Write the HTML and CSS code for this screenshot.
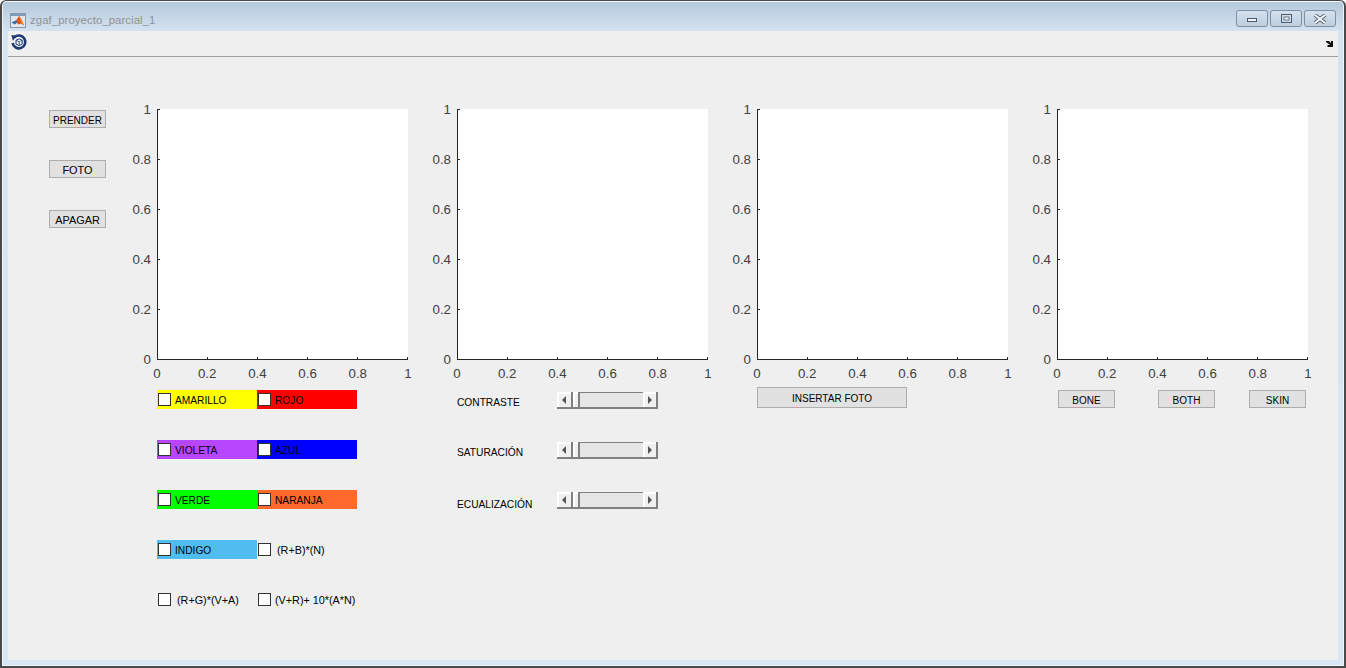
FILE: index.html
```html
<!DOCTYPE html>
<html lang="es">
<head>
    <meta charset="UTF-8">
    <title>zgaf_proyecto_parcial_1</title>
    <link rel="stylesheet" href="styles.css">
</head>
<body>
<div class="window">
    <div class="titlebar">
        <div class="title">
            <svg class="app-icon" width="16" height="15" viewBox="0 0 16 15">
                <rect x="0.5" y="0.5" width="15" height="14" fill="#dfe6ee" stroke="#8a97a6"/>
                <rect x="1" y="1" width="14" height="2" fill="#7d9dc4"/>
                <path d="M1.5 9.5 L6 7.5 L9 3 L11 5.5 L14 12.5 L11 10.5 L9 11.5 L6 9.5 Z" fill="#d9541e"/>
                <path d="M1.5 9.5 L6 7.5 L7 9.5 L5 11.5 Z" fill="#2f6fb3"/>
                <path d="M9 3 L11 5.5 L14 12.5 L11 9.5 Z" fill="#f08a24"/>
            </svg>
            <span>zgaf_proyecto_parcial_1</span>
        </div>
        <div class="win-buttons">
            <div class="win-btn btn-min"><svg width="10" height="4" viewBox="0 0 10 4"><rect x="0.5" y="0.5" width="9" height="3" fill="#f2f4f7" stroke="#4d5a6b"/></svg></div>
            <div class="win-btn btn-max"><svg width="11" height="9" viewBox="0 0 11 9"><rect x="0.5" y="0.5" width="10" height="8" fill="#cfdceb" stroke="#4d5a6b"/><rect x="3" y="3" width="5" height="3" fill="#f2f4f7" stroke="#4d5a6b" stroke-width="0.8"/></svg></div>
            <div class="win-btn btn-close"><svg width="14" height="10" viewBox="0 0 14 10"><path d="M2 1 L12 9 M12 1 L2 9" stroke="#4d5a6b" stroke-width="3.8"/><path d="M2 1 L12 9 M12 1 L2 9" stroke="#f4f6f8" stroke-width="2.2"/></svg></div>
        </div>
    </div>

    <div class="client">
        <div class="toolbar">
            <svg width="18" height="18" viewBox="0 0 18 18">
                <path d="M4.4 4.4 A6.4 6.4 0 1 1 2.6 10" fill="none" stroke="#1f3a72" stroke-width="2.6"/>
                <path d="M1.4 2 L7 2.8 L2.8 7.8 Z" fill="#1f3a72"/>
                <path d="M6 7.2 L9.2 5.8 L12.2 7.2 L12.2 11 L9.2 12.6 L6 11 Z" fill="#eef2f8" stroke="#1f3a72"/>
                <path d="M6.2 7.4 L9.2 8.8 L12 7.4 M9.2 8.8 L9.2 12.4" fill="none" stroke="#1f3a72" stroke-width="0.8"/>
            </svg>
            <svg class="dock" width="7" height="6" viewBox="0 0 7 6"><path d="M0 0 L3 0 L5 2 L5 0 L7 0 L7 6 L1.5 6 L1.5 4 L4 4 L0 1 Z" fill="#111"/></svg>
        </div>

        <div class="stage">
            <div class="side-buttons">
                <div class="push">PRENDER</div>
                <div class="push big">FOTO</div>
                <div class="push big">APAGAR</div>
            </div>

            <div class="panel">
                <div class="axes">
                    <div class="yticks"><span>1</span><span>0.8</span><span>0.6</span><span>0.4</span><span>0.2</span><span>0</span></div>
                    <div class="plot"></div>
                </div>
                <div class="xticks"><span>0</span><span>0.2</span><span>0.4</span><span>0.6</span><span>0.8</span><span>1</span></div>
                <div class="checks">
                    <label class="check amarillo"><i></i>AMARILLO</label>
                    <label class="check rojo"><i></i>ROJO</label>
                    <label class="check violeta"><i></i>VIOLETA</label>
                    <label class="check azul"><i></i>AZUL</label>
                    <label class="check verde"><i></i>VERDE</label>
                    <label class="check naranja"><i></i>NARANJA</label>
                    <label class="check indigo"><i></i>INDIGO</label>
                    <label class="check formula wide"><i></i>(R+B)*(N)</label>
                    <label class="check formula wide"><i></i>(R+G)*(V+A)</label>
                    <label class="check formula"><i></i>(V+R)+ 10*(A*N)</label>
                </div>
            </div>

            <div class="panel">
                <div class="axes">
                    <div class="yticks"><span>1</span><span>0.8</span><span>0.6</span><span>0.4</span><span>0.2</span><span>0</span></div>
                    <div class="plot"></div>
                </div>
                <div class="xticks"><span>0</span><span>0.2</span><span>0.4</span><span>0.6</span><span>0.8</span><span>1</span></div>
                <div class="sliders">
                    <div class="slider-row">
                        <span class="slider-label">CONTRASTE</span>
                        <div class="slider"><b class="arrow left"></b><b class="thumb"></b><b class="track"></b><b class="arrow right"></b></div>
                    </div>
                    <div class="slider-row">
                        <span class="slider-label">SATURACIÓN</span>
                        <div class="slider"><b class="arrow left"></b><b class="thumb"></b><b class="track"></b><b class="arrow right"></b></div>
                    </div>
                    <div class="slider-row low">
                        <span class="slider-label">ECUALIZACIÓN</span>
                        <div class="slider"><b class="arrow left"></b><b class="thumb"></b><b class="track"></b><b class="arrow right"></b></div>
                    </div>
                </div>
            </div>

            <div class="panel">
                <div class="axes">
                    <div class="yticks"><span>1</span><span>0.8</span><span>0.6</span><span>0.4</span><span>0.2</span><span>0</span></div>
                    <div class="plot"></div>
                </div>
                <div class="xticks"><span>0</span><span>0.2</span><span>0.4</span><span>0.6</span><span>0.8</span><span>1</span></div>
                <div class="push insert">INSERTAR FOTO</div>
            </div>

            <div class="panel last">
                <div class="axes">
                    <div class="yticks"><span>1</span><span>0.8</span><span>0.6</span><span>0.4</span><span>0.2</span><span>0</span></div>
                    <div class="plot"></div>
                </div>
                <div class="xticks"><span>0</span><span>0.2</span><span>0.4</span><span>0.6</span><span>0.8</span><span>1</span></div>
                <div class="map-buttons">
                    <div class="push">BONE</div>
                    <div class="push">BOTH</div>
                    <div class="push">SKIN</div>
                </div>
            </div>
        </div>
    </div>
</div>
</body>
</html>
```

FILE: styles.css
```css
/* ventana */
html, body {
    margin: 0;
    height: 100%;
    overflow: hidden;
}

body {
    font-family: "Liberation Sans", Arial, sans-serif;
    background: #ffffff;
}

.window {
    width: 1346px;
    height: 668px;
    box-sizing: border-box;
    padding: 0 6px 6px 6px;
    border: 1px solid #4a4a4a;
    border-width: 1px 2px 2px 2px;
    border-radius: 6px 6px 0 0;
    background: linear-gradient(to bottom, #b4c8db 0, #d6e4f2 32px, #d9e6f3 100%);
    box-shadow: inset 0 0 0 1px #f1f5f9;
    display: flex;
    flex-direction: column;
}

.titlebar {
    height: 30px;
    flex: none;
    display: flex;
    justify-content: space-between;
}

.title {
    display: flex;
    align-items: center;
    gap: 4px;
    font-size: 11.3px;
    color: #8e9298;
    margin-left: 2px;
    letter-spacing: 0.1px;
    padding-top: 9px;
    height: 20px;
}

.win-buttons {
    display: flex;
    gap: 2px;
    margin-top: 9px;
    margin-right: 2px;
    height: 17px;
}

.win-btn {
    box-sizing: border-box;
    width: 32px;
    height: 17px;
    border: 1px solid #7f8fa3;
    border-radius: 3px;
    background: linear-gradient(to bottom, #d5e1ee, #bccede);
    display: flex;
    align-items: center;
    justify-content: center;
}

.btn-min svg {
    margin-top: 3px;
}

.client {
    flex: 1;
    background: #efefef;
    display: flex;
    flex-direction: column;
    min-height: 0;
}

.toolbar {
    height: 26px;
    flex: none;
    box-sizing: border-box;
    border-bottom: 1px solid #a0a0a0;
    padding: 2px 5px 0 2px;
    display: flex;
    justify-content: space-between;
    align-items: flex-start;
}

.dock {
    margin-top: 8px;
}

/* zona de controles */
.stage {
    display: flex;
    padding: 52px 0 0 41px;
}

.side-buttons {
    display: flex;
    flex-direction: column;
    gap: 32px;
    flex: none;
    width: 57px;
    margin: 1px 51px 0 0;
}

.push {
    box-sizing: border-box;
    height: 18px;
    padding-top: 2px;
    border: 1px solid #adadad;
    background: #e1e1e1;
    color: #000;
    font-size: 10px;
    display: flex;
    align-items: center;
    justify-content: center;
}

.push.big {
    font-size: 10.9px;
}

.panel {
    flex: none;
    width: 251px;
    margin-right: 49px;
}

.panel.last {
    margin-right: 0;
}

/* ejes */
.axes {
    display: flex;
    height: 251px;
}

.yticks {
    width: 0;
    margin-left: -6px;
    margin-right: 6px;
    display: flex;
    flex-direction: column;
    justify-content: space-between;
}

.yticks span {
    height: 0;
    display: flex;
    align-items: center;
    justify-content: flex-end;
    font-size: 13.3px;
    color: #404040;
}

.plot {
    flex: 1;
    box-sizing: border-box;
    border-left: 1px solid #262626;
    border-bottom: 1px solid #262626;
    background-color: #ffffff;
    background-image:
        repeating-linear-gradient(to right, #262626 0 1px, transparent 1px 50px),
        repeating-linear-gradient(to bottom, #262626 0 1px, transparent 1px 50px);
    background-origin: border-box;
    background-clip: border-box;
    background-size: 100% 3px, 3px 100%;
    background-position: left bottom, left top;
    background-repeat: no-repeat;
}

.xticks {
    display: flex;
    justify-content: space-between;
    height: 15px;
    margin-top: 6px;
}

.xticks span {
    width: 0;
    display: flex;
    justify-content: center;
    font-size: 13.3px;
    line-height: 15px;
    color: #404040;
}

/* casillas de color */
.checks {
    display: grid;
    grid-template-columns: 100px 100px;
    grid-auto-rows: 19px;
    row-gap: 31px;
    margin-top: 9px;
}

.check {
    display: flex;
    align-items: center;
    box-sizing: border-box;
    font-size: 10.2px;
    color: #000;
    padding: 2px 0 0 1px;
    white-space: nowrap;
}

.check i {
    box-sizing: border-box;
    width: 13px;
    height: 13px;
    border: 1px solid #333;
    background: #fff;
    margin: 0 4px 2px 0;
    flex: none;
}

.check.formula {
    font-size: 10.8px;
    padding-top: 0;
}

.check.formula i {
    margin-bottom: 0;
}

.check.wide i {
    margin-right: 6px;
}

.amarillo { background: #ffff00; }
.rojo { background: #ff0000; }
.violeta { background: #b946ff; }
.azul { background: #0000ff; }
.verde { background: #00ff00; }
.naranja { background: #ff692b; }
.indigo { background: #4fbdf0; }

/* barras */
.sliders {
    margin-top: 11px;
    display: flex;
    flex-direction: column;
    gap: 33px;
}

.slider-row {
    display: flex;
    height: 17px;
}

.slider-label {
    width: 100px;
    font-size: 10.2px;
    color: #000;
    line-height: 12px;
    margin-top: 5px;
}

.slider-row.low .slider-label {
    margin-top: 7px;
}

.slider {
    display: flex;
    width: 101px;
    height: 17px;
    box-sizing: border-box;
    border-bottom: 2px solid #808080;
}

.slider b {
    box-sizing: border-box;
    height: 15px;
    flex: none;
}

.arrow {
    width: 16px;
    background: #f0f0f0;
    border-right: 2px solid #808080;
    display: flex;
    align-items: center;
    justify-content: center;
    box-shadow: inset 2px 2px 0 #ffffff;
}

.arrow::before {
    content: "";
    width: 0;
    height: 0;
    border-top: 4px solid transparent;
    border-bottom: 4px solid transparent;
}

.arrow.left::before {
    border-right: 4px solid #555;
}

.arrow.right {
    width: 15px;
}

.arrow.right::before {
    border-left: 4px solid #555;
}

.thumb {
    display: block;
    width: 7px;
    background: #f0f0f0;
    border-right: 2px solid #808080;
    box-shadow: inset 2px 2px 0 #ffffff;
}

.slider b.track {
    display: block;
    flex: 1;
    background: #e6e6e6;
    border-top: 1px solid #808080;
}

/* botones bajo los ejes */
.push.insert {
    width: 150px;
    height: 21px;
    margin-top: 6px;
}

.map-buttons {
    display: flex;
    margin: 9px 0 0 1px;
}

.map-buttons .push {
    width: 57px;
    margin-right: 43px;
}

.map-buttons .push:last-child {
    margin-left: -9px;
    margin-right: 0;
}
```
